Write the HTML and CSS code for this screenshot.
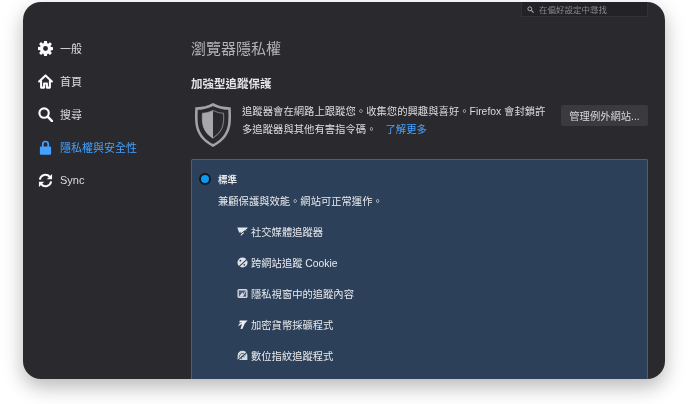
FILE: index.html
```html
<!DOCTYPE html>
<html lang="zh-Hant">
<head>
<meta charset="utf-8">
<title>瀏覽器隱私權</title>
<link rel="stylesheet" href="styles.css">
</head>
<body>
<div class="window">
  <nav class="sidebar">
    <a class="nav-item">
      <svg class="nav-icon" viewBox="0 0 16 16"><path fill="#fbfbfe" fill-rule="evenodd" d="M6.500 0h3l.4 2.400.9.400L12.800 1.300l2 2-1.500 2 .4.900 2.300.4v3l-2.300.4-.4.900 1.500 2-2 2-2-1.500-.9.400-.4 2.300h-3l-.4-2.300-.9-.4-2 1.500-2-2 1.500-2-.4-.9L0 9.500v-3l2.300-.4.400-.9-1.500-2 2-2 2 1.500.9-.4zM8 5.400a2.600 2.600 0 1 0 0 5.200 2.600 2.600 0 0 0 0-5.200z"/></svg>
      <span>一般</span>
    </a>
    <a class="nav-item">
      <svg class="nav-icon" viewBox="0 0 16 16"><path fill="none" stroke="#fbfbfe" stroke-width="2.200" stroke-linejoin="round" stroke-linecap="round" d="M1.200 8 8 1.500 14.800 8M3.300 7v7.500h3.200v-4.300h3v4.300h3.200V7"/></svg>
      <span>首頁</span>
    </a>
    <a class="nav-item">
      <svg class="nav-icon" viewBox="0 0 16 16"><circle cx="6.500" cy="6.500" r="5" fill="none" stroke="#fbfbfe" stroke-width="2.300"/><path d="m10.300 10.300 4.700 4.700" stroke="#fbfbfe" stroke-width="2.700" stroke-linecap="round"/></svg>
      <span>搜尋</span>
    </a>
    <a class="nav-item active">
      <svg class="nav-icon" viewBox="0 0 16 16"><path fill="#45a1ff" fill-rule="evenodd" d="M4.200 7V4.500a3.800 3.800 0 0 1 7.600 0V7h.900c.700 0 1.300.500 1.300 1.200v6.300c0 .800-.600 1.300-1.300 1.300H3.300c-.700 0-1.300-.5-1.300-1.300V8.200C2 7.500 2.600 7 3.300 7zm1.800 0h4V4.500a2 2 0 0 0-4 0z"/></svg>
      <span>隱私權與安全性</span>
    </a>
    <a class="nav-item">
      <svg class="nav-icon" viewBox="0 0 16 16"><path fill="none" stroke="#fbfbfe" stroke-width="2.100" d="M2 7a6 6 0 0 1 10.500-3l1 1.200M14 9a6 6 0 0 1-10.500 3l-1-1.200"/><path fill="#fbfbfe" d="M15 1v5.600H9.400zM1 15V9.400h5.600z"/></svg>
      <span class="latin">Sync</span>
    </a>
  </nav>
  <main class="content">
    <div class="topbar">
      <div class="search">
        <svg class="search-icon" viewBox="0 0 16 16"><circle cx="6.500" cy="6.500" r="4.500" fill="none" stroke="#b1b1b3" stroke-width="2.200"/><path d="m10 10 5 5" stroke="#b1b1b3" stroke-width="2.400"/></svg>
        <span>在偏好設定中尋找</span>
      </div>
    </div>
    <h1 class="title">瀏覽器隱私權</h1>
    <h2 class="subtitle">加強型追蹤保護</h2>
    <div class="intro">
      <svg class="shield" viewBox="0 0 38 44"><path fill="none" stroke="#a3a3a6" stroke-width="2.600" d="M19 1.500c5 2.700 10 4 16.500 4 0 0 .5 8.500 0 14C34.500 31 27 38.500 19 42.500 11 38.500 3.500 31 2.500 19.500c-.5-5.500 0-14 0-14C9 5.500 14 4.200 19 1.500z"/><path fill="none" stroke="#77777a" stroke-width="1.200" d="M19 7.500c3.800 1.800 7 2.600 10.500 2.800 0 0 .3 4.700 0 8.700-.7 7.500-5 12.500-10.500 16-5.500-3.500-9.800-8.500-10.500-16-.3-4 0-8.700 0-8.700C12 10.100 15.200 9.300 19 7.500z"/><path fill="#a8a8ab" d="M19 7.500v28c-5.500-3.500-9.800-8.500-10.500-16-.3-4 0-9.200 0-9.200C12 10.100 15.200 9.300 19 7.500z"/></svg>
      <p class="intro-text">追蹤器會在網路上跟蹤您。收集您的興趣與喜好。Firefox 會封鎖許<br>多追蹤器與其他有害指令碼。<a class="learn">了解更多</a></p>
      <button class="btn">管理例外網站...</button>
    </div>
    <section class="panel">
      <div class="radio-row">
        <span class="radio"></span>
        <strong>標準</strong>
      </div>
      <p class="desc">兼顧保護與效能。網站可正常運作。</p>
      <ul class="list">
        <li><svg class="ti" viewBox="0 0 12 12"><path fill="#e2e5ea" d="M.3 1.500h11.400L9.800 5.500H7l.5 2.500-3.500 3 .6-4H2.300z"/><path stroke="#2d4059" stroke-width="1" d="M1 11 11.500 3"/></svg>社交媒體追蹤器</li>
        <li><svg class="ti" viewBox="0 0 12 12"><circle cx="6" cy="6" r="5.500" fill="#dfe2e7"/><path stroke="#2d4059" stroke-width="1.200" d="M1 11.500 11.500 2"/><circle cx="3.700" cy="4" r="1" fill="#2d4059"/><circle cx="8" cy="8.500" r="1" fill="#2d4059"/></svg>跨網站追蹤 Cookie</li>
        <li><svg class="ti" viewBox="0 0 12 12"><rect x=".5" y="1" width="11" height="10" rx="1.800" fill="#d5d8de"/><rect x="2" y="2.700" width="8" height="6.800" fill="#4a5b72"/><path fill="#d5d8de" d="m2 9.500 4-5 1 2 2-3.500 1 0-3.500 6.500z"/></svg>隱私視窗中的追蹤內容</li>
        <li><svg class="ti" viewBox="0 0 12 12"><path fill="#eef0f3" d="M3 1.500h8.500L8.500 5 5.800 11H3.800l1.700-5.600L1 8l1.800-3 3-1.300H2.500z"/></svg>加密貨幣採礦程式</li>
        <li><svg class="ti" viewBox="0 0 12 12"><path fill="#d5d8de" d="M.7 11V6a5.300 5.300 0 0 1 10.600 0v5z"/><path fill="none" stroke="#2d4059" stroke-width=".8" d="M2.500 8c0-5 5.500-5.500 6.500-2M5 10c-.7-4 2.500-4.500 3-2"/><path stroke="#2d4059" stroke-width="1.200" d="M.5 11.500 11.500 2"/></svg>數位指紋追蹤程式</li>
      </ul>
    </section>
  </main>
</div>
</body>
</html>
```

FILE: styles.css
```css
* { box-sizing: border-box; }
html, body { margin: 0; padding: 0; background: #fff; }
body {
  width: 688px;
  height: 404px;
  overflow: hidden;
  padding: 2px 23px 0;
  font-family: "Liberation Sans", "Noto Sans CJK TC", sans-serif;
}
.window {
  display: flex;
  width: 642px;
  height: 377px;
  background: #2a2a2e;
  border-radius: 18px;
  overflow: hidden;
  box-shadow: 0 8px 20px rgba(0, 0, 0, 0.28);
  color: #f9f9fa;
}
.sidebar {
  width: 168px;
  flex: none;
  padding-top: 36px;
  display: flex;
  flex-direction: column;
  gap: 13px;
  padding-left: 15px;
  filter: blur(0.3px);
}
.nav-item {
  display: flex;
  align-items: center;
  gap: 7px;
  height: 20px;
  font-size: 11px;
  color: #dcdcde;
}
.nav-item.active { color: #45a1ff; }
.nav-icon { width: 15px; height: 15px; flex: none; }
.latin { font-size: 11px; }
.content {
  flex: 1;
  min-width: 0;
  padding-right: 17px;
  display: flex;
  flex-direction: column;
  filter: blur(0.3px);
}
.topbar { display: flex; justify-content: flex-end; height: 15px; }
.search {
  width: 127px;
  height: 15px;
  background: #232327;
  border: 1px solid #323236;
  border-top: 0;
  display: flex;
  align-items: center;
  gap: 5px;
  padding-left: 5px;
  font-size: 8.500px;
  color: #88888c;
}
.search-icon { width: 7px; height: 7px; }
.title {
  margin: 22px 0 0;
  font-size: 15px;
  line-height: 20px;
  font-weight: 400;
  color: #b4b4b6;
}
.subtitle {
  margin: 18px 0 0;
  font-size: 11.500px;
  line-height: 15px;
  font-weight: 700;
  color: #e4e4e6;
}
.intro {
  display: flex;
  align-items: flex-start;
  margin-top: 11px;
  height: 52px;
}
.shield { width: 38px; height: 44px; margin: 0 10px 0 3px; flex: none; }
.intro-text {
  margin: 0;
  flex: 1;
  white-space: nowrap;
  font-size: 10.350px;
  line-height: 18px;
  color: #dcdcde;
}
.learn { color: #45a1ff; margin-left: 9px; }
.btn {
  flex: none;
  width: 87px;
  height: 21px;
  border: 0;
  border-radius: 2px;
  background: #3b3b3f;
  color: #d7d7d9;
  font: inherit;
  font-size: 10.300px;
  padding: 0;
  margin-top: 2px;
}
.panel {
  flex: 1;
  margin-top: 4px;
  background: #2d4059;
  border: 1px solid #3f628c;
  border-bottom: 0;
  border-radius: 2px 2px 0 0;
  padding: 11px 0 0 26px;
  font-size: 10.300px;
  color: #e8eaee;
  overflow: hidden;
}
.radio-row {
  position: relative;
  display: flex;
  align-items: center;
  height: 16px;
  font-size: 9.500px;
}
.radio {
  position: absolute;
  left: -19px;
  top: 2px;
  width: 12px;
  height: 12px;
  border-radius: 50%;
  background: #0a9af0;
  border: 2px solid #14171c;
}
.desc { margin: 7px 0 0; line-height: 16px; }
.list { list-style: none; margin: 13px 0 0; padding: 0 0 0 19px; display: flex; flex-direction: column; gap: 15px; }
.list li { display: flex; align-items: center; gap: 3px; height: 16px; }
.ti { width: 11px; height: 11px; flex: none; }
```
